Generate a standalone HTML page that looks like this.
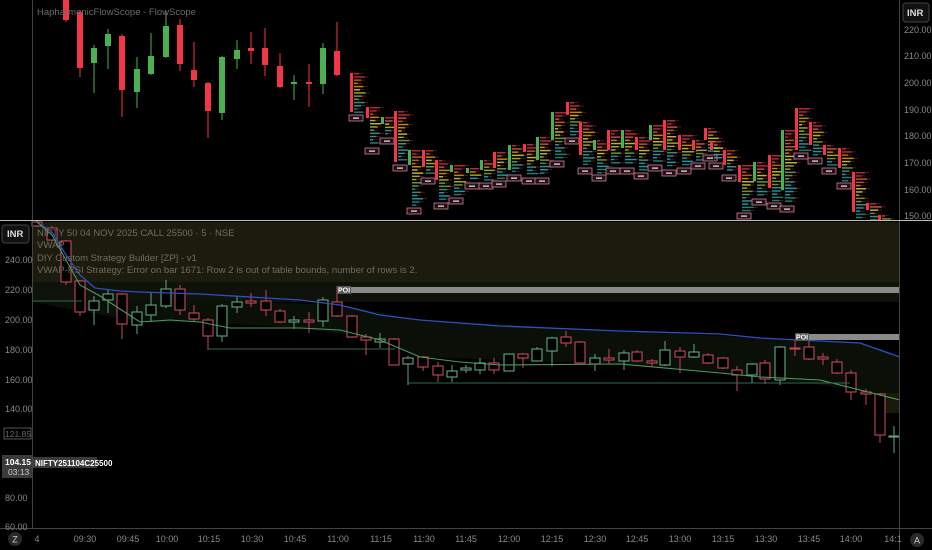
<!DOCTYPE html>
<html><head><meta charset="utf-8"><style>
html,body{margin:0;padding:0;background:#000;width:932px;height:550px;overflow:hidden;font-family:"Liberation Sans",sans-serif}
svg{display:block}
</style></head><body>
<svg id="s" width="932" height="550" xmlns="http://www.w3.org/2000/svg" font-family="Liberation Sans, sans-serif">
<rect width="932" height="550" fill="#000"/>
<rect x="33" y="222" width="867" height="60" fill="#1c1c0e"/>
<rect x="33" y="282" width="867" height="20" fill="#0e120a"/>
<polygon points="33,300 200,300 340,305 420,320 620,331 760,338 860,343 900,357 900,400 860,390 760,377 620,364 420,357 380,340 300,328 200,322 140,322 33,302" fill="#0a0f08"/>
<rect x="880" y="393" width="20" height="20" fill="#1a1a0a"/>
<g id="bot"></g>
<g id="top"></g>
<polyline fill="none" stroke="#2f4fbf" stroke-width="1.3" points="37,222 52,232 66,255 80,275 95,288 120,291 140,292 200,294 300,300 340,305 380,315 420,320 500,326 620,331 720,334 760,338 800,340 860,343 900,357"/>
<polyline fill="none" stroke="#4c9a5a" stroke-width="1.1" points="37,222 52,235 66,260 80,285 100,296 140,322 170,320 200,322 230,328 300,328 340,330 380,340 420,357 460,362 500,365 620,364 720,373 760,377 820,380 860,390 900,400"/>
<line x1="33" y1="301" x2="82" y2="301" stroke="#2d6b55"/>
<line x1="208" y1="349" x2="395" y2="349" stroke="#2d6b55"/>
<line x1="408" y1="383" x2="850" y2="383" stroke="#2d6b55"/>
<rect x="337" y="287" width="563" height="6" fill="#8a8a8a"/>
<rect x="337" y="286" width="14" height="8" fill="#555"/>
<text x="338" y="292.5" font-size="7" fill="#fff" font-weight="bold">POI</text>
<rect x="795" y="334" width="105" height="6" fill="#8a8a8a"/>
<rect x="795" y="333" width="14" height="8" fill="#555"/>
<text x="796" y="339.5" font-size="7" fill="#fff" font-weight="bold">POI</text>
<g font-size="9.5" fill="#6e6e5e">
<text x="37" y="236">NIFTY 50 04 NOV 2025 CALL 25500 · 5 · NSE</text>
<text x="37" y="248">VWAP</text>
<text x="37" y="261">DIY Custom Strategy Builder  [ZP] - v1</text>
<text x="37" y="273">VWAP-RSI Strategy: Error on bar 1671: Row 2 is out of table bounds, number of rows is 2.</text>
</g>
<text x="37" y="15" font-size="9.5" fill="#6a6a6a">HapharmonicFlowScope - FlowScope</text>
<line x1="32.5" y1="0" x2="32.5" y2="529" stroke="#444"/>
<line x1="899.5" y1="0" x2="899.5" y2="550" stroke="#444"/>
<line x1="0" y1="220.5" x2="932" y2="220.5" stroke="#bbb"/>
<line x1="0" y1="528.5" x2="932" y2="528.5" stroke="#444"/>
<rect x="903" y="3" width="26" height="19" rx="3" fill="#111" stroke="#444"/>
<text x="907" y="16" font-size="9.5" fill="#ddd" font-weight="bold">INR</text>
<g font-size="9" fill="#888">
<text x="904" y="33">220.00</text><text x="904" y="59">210.00</text><text x="904" y="86">200.00</text><text x="904" y="113">190.00</text><text x="904" y="139">180.00</text><text x="904" y="166">170.00</text><text x="904" y="193">160.00</text><text x="904" y="219">150.00</text>
</g>
<rect x="2" y="225" width="27" height="18" rx="3" fill="#111" stroke="#444"/>
<text x="7" y="237" font-size="9.5" fill="#ddd" font-weight="bold">INR</text>
<g font-size="9" fill="#888">
<text x="5" y="263">240.00</text><text x="5" y="293">220.00</text><text x="5" y="323">200.00</text><text x="5" y="353">180.00</text><text x="5" y="383">160.00</text><text x="5" y="412">140.00</text><text x="5" y="501">80.00</text><text x="5" y="530">60.00</text>
</g>
<rect x="4" y="428" width="27" height="11" fill="none" stroke="#555"/>
<text x="5" y="437" font-size="8.5" fill="#666">121.85</text>
<rect x="2" y="455" width="30" height="23" fill="#3a3a3a"/>
<text x="5" y="465" font-size="8.5" fill="#fff" font-weight="bold">104.15</text>
<text x="8" y="475" font-size="8.5" fill="#ccc">03:13</text>
<rect x="33" y="457" width="64" height="11" fill="#3a3a3a"/>
<text x="35" y="466" font-size="8" fill="#fff" font-weight="bold">NIFTY251104C25500</text>
<g font-size="9" fill="#888" text-anchor="middle">
<text x="37" y="542">4</text><text x="85" y="542">09:30</text><text x="128" y="542">09:45</text><text x="167" y="542">10:00</text><text x="209" y="542">10:15</text><text x="252" y="542">10:30</text><text x="295" y="542">10:45</text><text x="338" y="542">11:00</text><text x="381" y="542">11:15</text><text x="424" y="542">11:30</text><text x="466" y="542">11:45</text><text x="509" y="542">12:00</text><text x="552" y="542">12:15</text><text x="595" y="542">12:30</text><text x="637" y="542">12:45</text><text x="680" y="542">13:00</text><text x="723" y="542">13:15</text><text x="766" y="542">13:30</text><text x="809" y="542">13:45</text><text x="851" y="542">14:00</text><text x="893" y="542">14:1</text>
</g>
<circle cx="15" cy="539" r="7" fill="#2a2a2a"/><text x="15" y="542.5" font-size="9" fill="#ccc" text-anchor="middle">Z</text>
<circle cx="917" cy="540" r="7" fill="#2a2a2a"/><text x="917" y="543.5" font-size="9" fill="#ccc" text-anchor="middle">A</text>
</svg>
<script>
var NS="http://www.w3.org/2000/svg";
function el(p,t,a){var e=document.createElementNS(NS,t);for(var k in a)e.setAttribute(k,a[k]);p.appendChild(e);return e;}
var B=[[37,222,226,221,227,0],[52,228,240,226,241,0],[66,241,282,240,285,0],[80,281,312,280,316,0],[94,301,310,296,325,1],[108,294,300,290,313,1],[122,294,324,293,339,0],[137,312,325,306,334,1],[151,305,315,293,322,1],[166,289,306,280,308,1],[180,289,310,285,315,0],[194,313,319,305,322,0],[208,320,336,318,350,0],[222,306,336,304,342,1],[237,302,307,296,313,1],[251,301,303,293,307,0],[266,301,310,290,316,0],[280,311,322,309,323,0],[294,320,322,316,329,1],[309,320,322,312,333,0],[323,300,321,297,327,1],[337,302,316,286,317,0],[352,316,337,315,338,0],[366,337,340,334,355,0],[380,339,342,333,348,1],[394,339,365,338,365,0],[408,358,364,356,385,1],[423,357,367,356,371,0],[438,366,375,362,382,0],[452,371,377,365,382,1],[466,368,370,365,373,1],[480,363,370,358,374,1],[494,363,370,358,374,0],[509,354,371,354,371,1],[523,354,358,353,368,0],[537,349,361,347,361,1],[552,338,351,337,366,1],[566,337,343,331,347,0],[580,342,363,341,363,0],[595,358,364,354,371,1],[609,358,360,349,364,0],[624,353,361,350,370,1],[637,352,361,350,362,0],[652,361,363,359,366,0],[665,350,365,341,366,1],[680,351,357,347,373,0],[694,352,357,344,358,1],[708,355,363,353,364,0],[723,358,368,357,369,0],[737,370,375,366,391,0],[752,364,375,363,383,1],[765,363,379,360,384,0],[780,347,380,346,385,1],[795,348,349,340,356,0],[809,347,359,340,360,0],[823,357,359,353,365,0],[837,362,373,359,374,0],[851,373,392,370,400,0],[866,392,394,389,405,0],[880,394,435,393,443,0],[894,436,437,426,453,1]];
var gb=document.getElementById("bot");
B.forEach(function(c){var col=c[5]?"#5fa882":"#c4485a";
el(gb,"line",{x1:c[0],x2:c[0],y1:c[3],y2:c[4],stroke:col});
el(gb,"rect",{x:c[0]-5,y:c[1],width:10,height:Math.max(1,c[2]-c[1]),fill:"#000",stroke:col,"stroke-width":1.1});});
var T=[[66,0,20,0,22,0],[80,12,68,10,77,0],[94,48,63,45,93,1],[108,34,46,29,69,1],[122,36,90,34,117,0],[137,69,92,57,108,1],[151,56,74,33,75,1],[166,26,57,11,58,1],[180,25,64,19,71,0],[194,70,80,42,87,0],[208,83,111,82,138,0],[222,57,113,56,120,1],[237,50,59,40,69,1],[251,48,51,32,64,0],[265,48,65,28,76,0],[280,66,87,53,88,0],[294,82,84,75,100,1],[309,82,84,64,107,0],[323,48,84,43,94,1],[337,51,75,22,76,0]];
var gt=document.getElementById("top");
T.forEach(function(c){var col=c[5]?"#4caf50":"#f23645";
el(gt,"line",{x1:c[0],x2:c[0],y1:c[3],y2:c[4],stroke:col});
el(gt,"rect",{x:c[0]-3,y:c[1],width:6,height:Math.max(2,c[2]-c[1]),fill:col});});
var F=[[352,73,112,73,112,0],[368,107,145,107,118,0],[383,117,135,117,124,1],[396,111,162,111,162,0],[410,150,205,150,165,1],[424,150,175,150,167,0],[437,160,200,160,180,0],[452,165,195,165,172,1],[468,168,180,168,173,1],[482,160,180,160,170,1],[495,152,178,152,168,0],[510,145,172,145,170,1],[525,144,175,144,152,0],[538,137,175,137,160,1],[553,112,158,112,140,1],[568,102,135,102,115,0],[581,122,165,122,155,0],[595,140,172,140,150,1],[609,130,165,130,150,0],[623,130,165,130,148,1],[637,137,170,137,150,0],[651,125,162,125,140,1],[665,120,167,120,150,0],[680,135,165,135,150,0],[694,140,160,140,150,0],[706,128,152,128,140,0],[712,141,160,141,150,0],[725,150,172,150,165,0],[740,165,210,165,182,0],[755,162,196,162,181,1],[770,155,200,155,188,0],[783,130,203,130,190,1],[797,108,150,108,150,0],[811,122,155,122,145,0],[825,145,165,145,155,0],[840,148,180,148,168,0],[854,172,217,172,212,0],[868,203,220,203,210,0],[880,215,220,215,220,0]];
var cols=["#f23645","#ff7043","#ffb300","#ffeb3b","#cddc39","#8bc34a","#4db6ac","#26c6da","#26a69a"];
F.forEach(function(f){var x=f[0];
for(var y=f[1];y<=f[2];y+=3.2){var t=(y-f[1])/Math.max(1,f[2]-f[1]);var ci=Math.min(8,Math.floor(t*9));
var w=3+((x*7+y*13)%9);
el(gt,"rect",{x:x+2,y:y,width:w,height:1.5,fill:cols[ci],opacity:0.75});
el(gt,"rect",{x:x+2+w,y:y+0.3,width:4,height:0.8,fill:"#a03040",opacity:0.6});}
el(gt,"rect",{x:x-2,y:f[3],width:3,height:Math.max(2,f[4]-f[3]),fill:f[5]?"#4caf50":"#f23645"});
if(f[2]<212){el(gt,"rect",{x:x-3,y:f[2]+3,width:14,height:6,fill:"#2a0c18",stroke:"#c08898","stroke-width":0.8});
el(gt,"rect",{x:x+1,y:f[2]+5.5,width:6,height:1.2,fill:"#eee"});}
});
</script>
</body></html>
